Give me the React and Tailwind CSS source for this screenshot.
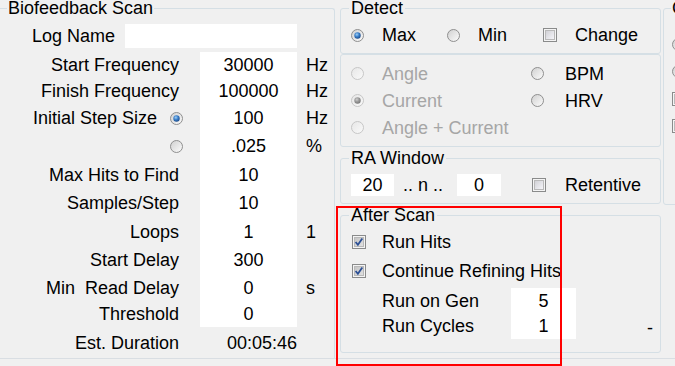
import React, { useId } from 'react';

// themed radio button, WinForms look
const Radio = ({ checked = false, disabled = false, className = '' }) => {
  const id = useId().replace(/:/g, '');
  return (
    <svg width="13" height="13" viewBox="0 0 13 13" className={`shrink-0 ${className}`}>
      <defs>
        <linearGradient id={`${id}f`} x1="0" y1="0" x2="1" y2="1">
          <stop offset="0" stopColor={disabled ? '#e6e6e6' : '#cfcfcf'} />
          <stop offset="1" stopColor={disabled ? '#fafafa' : '#fdfdfd'} />
        </linearGradient>
        <radialGradient id={`${id}d`} cx="0.4" cy="0.35" r="0.75">
          <stop offset="0" stopColor={disabled ? '#cfcfcf' : '#9fd0f5'} />
          <stop offset="0.45" stopColor={disabled ? '#9a9a9a' : '#3a7fca'} />
          <stop offset="1" stopColor={disabled ? '#6f6f6f' : '#173f7a'} />
        </radialGradient>
      </defs>
      <circle cx="6.5" cy="6.5" r="6" fill={`url(#${id}f)`} stroke={disabled ? '#c6c6c6' : '#8f8f8f'} />
      {checked && <circle cx="6.5" cy="6.5" r="3.2" fill={`url(#${id}d)`} />}
    </svg>
  );
};

const Check = ({ checked = false }) => {
  const id = useId().replace(/:/g, '');
  return (
    <svg width="14" height="14" viewBox="0 0 14 14" className="shrink-0">
      <defs>
        <linearGradient id={`${id}g`} x1="0" y1="0" x2="1" y2="1">
          <stop offset="0" stopColor={checked ? '#c4c4c4' : '#cfcfd4'} />
          <stop offset="1" stopColor={checked ? '#e2e2e2' : '#f7f7fb'} />
        </linearGradient>
      </defs>
      <rect x="0.5" y="0.5" width="13" height="13" fill="#f4f4f4" stroke="#8a8b8b" />
      <rect x="2.5" y="2.5" width="9" height="9" fill={`url(#${id}g)`} stroke="#b9b9b9" />
      {checked && (
        <path d="M3.6 7 L5.9 9.8 L10.3 3.6" fill="none" stroke="#2b4f95" strokeWidth="1.8" />
      )}
    </svg>
  );
};

const scanRows = [
  { label: 'Start Frequency', value: '30000', unit: 'Hz', h: 'h-[26px]' },
  { label: 'Finish Frequency', value: '100000', unit: 'Hz', h: 'h-[26px]' },
  { label: 'Initial Step Size', radio: 'on', value: '100', unit: 'Hz', h: 'h-[28px]' },
  { label: '', radio: 'off', value: '.025', unit: '%', h: 'h-[28px]' },
  { label: 'Max Hits to Find', value: '10', unit: '', h: 'h-[29px]' },
  { label: 'Samples/Step', value: '10', unit: '', h: 'h-[28px]' },
  { label: 'Loops', value: '1', unit: '1', h: 'h-[29px]' },
  { label: 'Start Delay', value: '300', unit: '', h: 'h-[28px]' },
  { label: 'Min  Read Delay', value: '0', unit: 's', h: 'h-[27px]' },
  { label: 'Threshold', value: '0', unit: '', h: 'h-[26px]' },
];

const Legend = ({ children }) => (
  <legend className="ml-[8px] px-[2px] leading-[16px]">{children}</legend>
);

const BiofeedbackScan = () => (
  <fieldset className="w-[335px] h-[358px] shrink-0 border border-l-0 border-b-0 border-[#d5dfe5] rounded-tr-[3px]">
    <legend className="ml-[7px] px-[1px] leading-[16px]">Biofeedback Scan</legend>

    <div className="mt-[7px] flex items-center h-[26px]">
      <div className="w-[115px] text-right">Log Name</div>
      <div className="ml-[10px] w-[172px] h-[24px] bg-white" />
    </div>

    <div className="mt-[3px] flex flex-col">
      {scanRows.map((r, i) => (
        <div key={i} className={`flex ${r.h}`}>
          <div className="w-[184px] pr-[5px] flex items-center justify-end gap-[13px] whitespace-pre">
            {r.label && <span>{r.label}</span>}
            {r.radio && <Radio checked={r.radio === 'on'} className="-mr-[4px]" />}
          </div>
          <div className="ml-[16px] w-[97px] bg-white flex items-center justify-center">{r.value}</div>
          <div className="ml-[9px] flex items-center">{r.unit}</div>
        </div>
      ))}
      <div className="flex h-[31px]">
        <div className="w-[184px] pr-[5px] flex items-center justify-end">Est. Duration</div>
        <div className="ml-[16px] w-[97px] flex items-center justify-end">00:05:46</div>
      </div>
    </div>
  </fieldset>
);

const Option = ({ children, gap = 'gap-[18px]', width = 'w-[96px]', disabled }) => (
  <div className={`flex items-center ${gap} ${width} ${disabled ? 'text-[#a6a6a6]' : ''}`}>{children}</div>
);

const RightPanel = () => (
  <div className="ml-[5px] w-[321px] shrink-0 flex flex-col">
    <fieldset className="h-[54px] border border-[#d5dfe5] rounded-[3px]">
      <Legend>Detect</Legend>
      <div className="mt-[8px] h-[22px] pl-[10px] flex items-center">
        <Option>
          <Radio checked />
          <span>Max</span>
        </Option>
        <Option>
          <Radio />
          <span>Min</span>
        </Option>
        <Option gap="gap-[18px]" width="">
          <Check />
          <span>Change</span>
        </Option>
      </div>
    </fieldset>

    <div className="h-[93px] border border-[#d5dfe5] rounded-[3px] pt-[5px]">
      <div className="h-[27px] flex pl-[10px]">
        <Option width="w-[180px]" disabled>
          <Radio disabled />
          <span>Angle</span>
        </Option>
        <Option gap="gap-[21px]" width="">
          <Radio />
          <span>BPM</span>
        </Option>
      </div>
      <div className="h-[27px] flex pl-[10px]">
        <Option width="w-[180px]" disabled>
          <Radio checked disabled />
          <span>Current</span>
        </Option>
        <Option gap="gap-[21px]" width="">
          <Radio />
          <span>HRV</span>
        </Option>
      </div>
      <div className="h-[27px] flex pl-[10px]">
        <Option width="w-[180px]" disabled>
          <Radio disabled />
          <span>Angle + Current</span>
        </Option>
      </div>
    </div>

    <fieldset className="mt-[3px] h-[54px] border border-[#d5dfe5] rounded-[3px]">
      <Legend>RA Window</Legend>
      <div className="mt-[8px] h-[22px] pl-[10px] flex items-center">
        <div className="w-[43px] h-[22px] bg-white flex items-center justify-center">20</div>
        <span className="ml-[9px]">.. n ..</span>
        <div className="ml-[14px] w-[44px] h-[22px] bg-white flex items-center justify-center">0</div>
        <div className="ml-[31px] flex items-center gap-[19px]">
          <Check />
          <span>Retentive</span>
        </div>
      </div>
    </fieldset>

    <fieldset className="mt-[3px] h-[146px] border border-[#d5dfe5] rounded-[3px]">
      <Legend>After Scan</Legend>
      <div className="mt-[4px] h-[29px] pl-[11px] flex items-center gap-[16px]">
        <Check checked />
        <span>Run Hits</span>
      </div>
      <div className="h-[29px] pl-[11px] flex items-center gap-[16px]">
        <Check checked />
        <span>Continue Refining Hits</span>
      </div>
      <div className="mt-[3px] h-[25px] pl-[41px] flex">
        <span className="w-[129px] flex items-center">Run on Gen</span>
        <div className="w-[65px] bg-white flex items-center justify-center">5</div>
      </div>
      <div className="h-[26px] pl-[41px] flex">
        <span className="w-[129px] flex items-center">Run Cycles</span>
        <div className="w-[65px] bg-white flex items-center justify-center">1</div>
        <span className="ml-[71px] flex items-center pt-[3px]">-</span>
      </div>
    </fieldset>
  </div>
);

const PartialGroup = () => (
  <fieldset className="ml-[2px] w-[60px] h-[205px] shrink-0 border border-[#d5dfe5] rounded-[3px]">
    <legend className="ml-[7px] px-[1px] leading-[16px]">C</legend>
    <div className="mt-[15px] pl-[8px]">
      <div className="h-[27px] flex items-center">
        <Radio />
      </div>
      <div className="h-[27px] flex items-center">
        <Radio />
      </div>
      <div className="h-[27px] flex items-center">
        <Check />
      </div>
      <div className="h-[27px] flex items-center">
        <Check />
      </div>
    </div>
  </fieldset>
);

const App = () => (
  <div className="relative w-[675px] h-[366px] overflow-hidden bg-[#f0f0f0] text-[18px] leading-[20px] text-black [font-family:'Liberation_Sans',Arial,sans-serif]">
    <div className="flex h-[358px]">
      <BiofeedbackScan />
      <RightPanel />
      <PartialGroup />
    </div>
    <div className="h-px bg-[#d9dee3]" />
    {/* annotation box drawn over the form */}
    <div className="absolute left-[336px] top-[206px] w-[226px] h-[160px] border-2 border-[#ff0000]" />
  </div>
);

export default App;
